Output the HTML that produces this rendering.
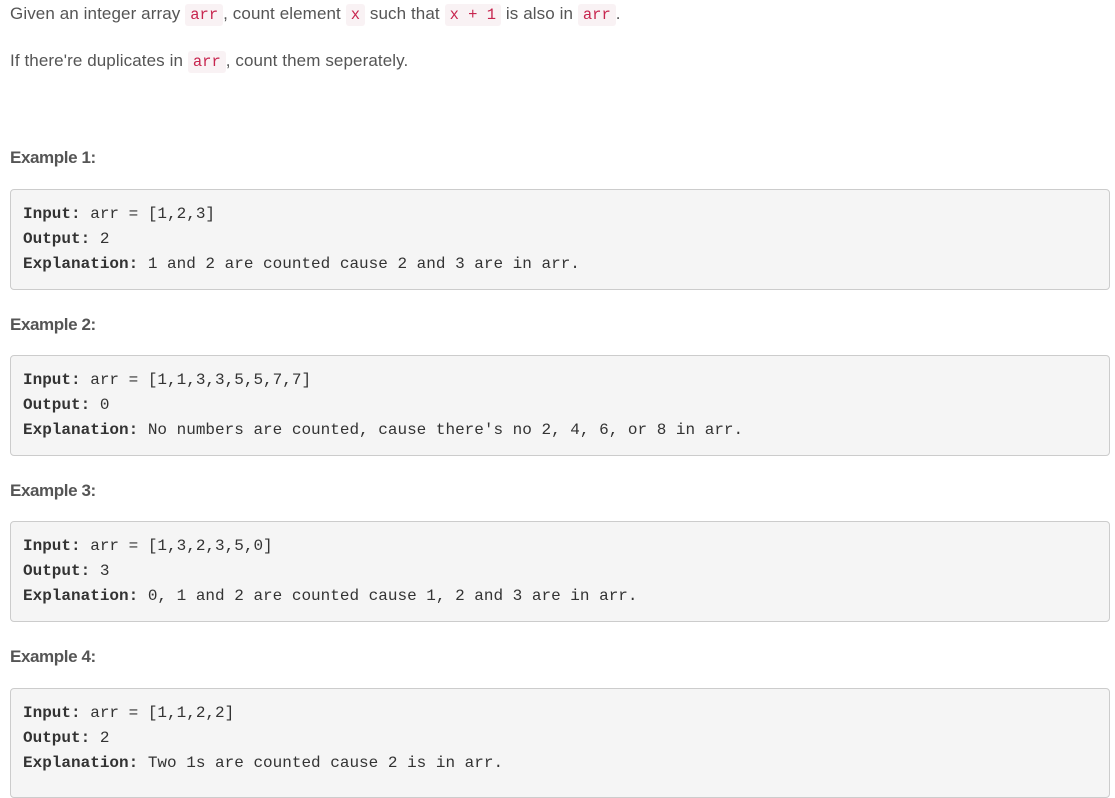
<!DOCTYPE html>
<html><head><meta charset="utf-8"><style>
body{margin:0;width:1115px;height:788px;overflow:hidden;background:#fff;font-family:"Liberation Sans",sans-serif;color:#555;position:relative}
.t{position:absolute;left:10px;font-size:17px;line-height:20px;white-space:nowrap;letter-spacing:0.1px}
code{font-family:"Liberation Mono",monospace;font-size:15.5px;color:#c7254e;background:#f9f2f4;padding:2px 5px;border-radius:3px;letter-spacing:0}
h4{position:absolute;left:10px;margin:0;font-size:17px;font-weight:bold;color:#555;line-height:20px;letter-spacing:-0.4px}
pre{position:absolute;left:10px;width:1100px;height:101px;margin:0;box-sizing:border-box;background:#f5f5f5;border:1px solid #ccc;border-radius:4px;padding:12px 12px;font-family:"Liberation Mono",monospace;font-size:16px;line-height:25px;color:#333}
pre b{color:#333}
</style></head><body>
<div class="t" style="top:4px">Given an integer array <code>arr</code>, count element <code>x</code> such that <code>x + 1</code> is also in <code>arr</code>.</div>
<div class="t" style="top:51px">If there're duplicates in <code>arr</code>, count them seperately.</div>
<h4 style="top:148px">Example 1:</h4>
<pre style="top:189px"><b>Input:</b> arr = [1,2,3]
<b>Output:</b> 2
<b>Explanation:</b> 1 and 2 are counted cause 2 and 3 are in arr.</pre>
<h4 style="top:315px">Example 2:</h4>
<pre style="top:355px"><b>Input:</b> arr = [1,1,3,3,5,5,7,7]
<b>Output:</b> 0
<b>Explanation:</b> No numbers are counted, cause there's no 2, 4, 6, or 8 in arr.</pre>
<h4 style="top:481px">Example 3:</h4>
<pre style="top:521px"><b>Input:</b> arr = [1,3,2,3,5,0]
<b>Output:</b> 3
<b>Explanation:</b> 0, 1 and 2 are counted cause 1, 2 and 3 are in arr.</pre>
<h4 style="top:647px">Example 4:</h4>
<pre style="top:688px;height:110px"><b>Input:</b> arr = [1,1,2,2]
<b>Output:</b> 2
<b>Explanation:</b> Two 1s are counted cause 2 is in arr.</pre>
</body></html>
